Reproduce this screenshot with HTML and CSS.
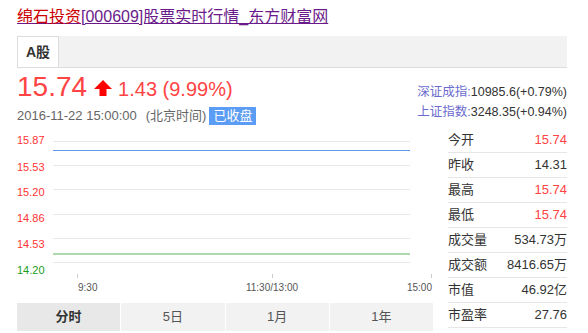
FILE: index.html
```html
<!DOCTYPE html>
<html lang="zh-CN">
<head>
  <meta charset="UTF-8" />
  <title>绵石投资[000609]股票实时行情_东方财富网</title>
  <link rel="stylesheet" href="styles.css">
</head>
<body>
<div class="page">

  <a class="title" href="#"><span class="name">绵石投资</span>[000609]股票实时行情_东方财富网</a>

  <div class="market-tabs">
    <span class="market-tab">A股</span>
  </div>

  <div class="quote">
    <div class="quote-main">
      <div class="price-line">
        <span class="price">15.74</span>
        <svg class="arrow" width="18" height="16" viewBox="0 0 18 16">
          <path d="M9 0 L18 9 L12.5 9 L12.5 16 L5.5 16 L5.5 9 L0 9 Z" fill="#f00"/>
        </svg>
        <span class="change">1.43 (9.99%)</span>
      </div>
      <div class="time-line">
        <span>2016-11-22 15:00:00</span>
        <span class="zone">(北京时间)</span>
        <span class="status">已收盘</span>
      </div>
    </div>
    <div class="indexes">
      <div><span class="idx-name">深证成指:</span>10985.6(+0.79%)</div>
      <div><span class="idx-name">上证指数:</span>3248.35(+0.94%)</div>
    </div>
  </div>

  <div class="main">
    <div class="chart-col">
      <svg class="chart" width="416" height="178" viewBox="0 0 416 178">
        <g class="grid">
          <line x1="36" x2="393" y1="16.5" y2="16.5"/>
          <line x1="36" x2="393" y1="40.5" y2="40.5"/>
          <line x1="36" x2="393" y1="64.5" y2="64.5"/>
          <line x1="36" x2="393" y1="89.5" y2="89.5"/>
          <line x1="36" x2="393" y1="113.5" y2="113.5"/>
          <line x1="36" x2="393" y1="137.5" y2="137.5"/>
        </g>
        <line class="avg" x1="36" x2="393" y1="25.5" y2="25.5"/>
        <line class="last" x1="36" x2="393" y1="129" y2="129"/>
        <g class="ylabels">
          <text x="0" y="19">15.87</text>
          <text x="0" y="46">15.53</text>
          <text x="0" y="71">15.20</text>
          <text x="0" y="97">14.86</text>
          <text x="0" y="123">14.53</text>
          <text x="0" y="149" class="down">14.20</text>
        </g>
        <g class="ticks">
          <line x1="60.5" x2="60.5" y1="149" y2="153"/>
          <line x1="255.5" x2="255.5" y1="149" y2="153"/>
          <line x1="414.5" x2="414.5" y1="149" y2="153"/>
        </g>
        <g class="xlabels">
          <text x="61" y="166">9:30</text>
          <text x="255" y="166" text-anchor="middle">11:30/13:00</text>
          <text x="415" y="166" text-anchor="end">15:00</text>
        </g>
      </svg>
      <div class="periods">
        <span class="period active">分时</span>
        <span class="period">5日</span>
        <span class="period">1月</span>
        <span class="period">1年</span>
      </div>
    </div>

    <div class="stats">
      <div class="row"><span>今开</span><span class="up">15.74</span></div>
      <div class="row"><span>昨收</span><span>14.31</span></div>
      <div class="row"><span>最高</span><span class="up">15.74</span></div>
      <div class="row"><span>最低</span><span class="up">15.74</span></div>
      <div class="row"><span>成交量</span><span>534.73万</span></div>
      <div class="row"><span>成交额</span><span>8416.65万</span></div>
      <div class="row"><span>市值</span><span>46.92亿</span></div>
      <div class="row"><span>市盈率</span><span>27.76</span></div>
    </div>
  </div>

</div>
</body>
</html>
```

FILE: styles.css
```css
body {
  margin: 0;
  background: #fff;
  color: #333;
  font-family: "Liberation Sans", "Noto Sans CJK SC", sans-serif;
}
.page {
  width: 550px;
  padding: 6px 0 0 17px;
}
.title {
  display: inline-block;
  font-size: 16px;
  line-height: 22px;
  color: #6a1b8a;
  text-decoration: underline;
}
.title .name {
  color: #cc0000;
}
.market-tabs {
  margin-top: 8px;
  height: 31px;
  background: #f2f2f2;
  border-bottom: 1px solid #ddd;
  display: flex;
}
.market-tab {
  width: 40px;
  background: #fff;
  border: 1px solid #ddd;
  border-bottom: none;
  font-size: 14px;
  font-weight: bold;
  line-height: 30px;
  text-align: center;
}
.quote {
  margin-top: 3px;
  display: flex;
  justify-content: space-between;
  align-items: flex-start;
}
.price-line {
  display: flex;
  align-items: center;
  height: 32px;
  color: #f44;
}
.price {
  font-size: 28px;
  line-height: 32px;
}
.arrow {
  margin: 2px 6px 0 7px;
}
.change {
  font-size: 20px;
  line-height: 32px;
  padding-top: 3px;
}
.time-line {
  margin-top: 4px;
  display: flex;
  align-items: center;
  font-size: 13px;
  line-height: 18px;
  color: #666;
}
.zone {
  margin-left: 9px;
}
.status {
  margin-left: 3px;
  padding: 0 4px;
  background: #5b9cf4;
  color: #fff;
}
.indexes {
  padding-top: 11px;
  font-size: 12.5px;
  line-height: 20px;
  color: #333;
  text-align: right;
}
.idx-name {
  color: #6b6bcf;
}
.main {
  display: flex;
  justify-content: space-between;
}
.chart-col {
  width: 416px;
}
.chart {
  display: block;
  font-family: "Liberation Sans", sans-serif;
}
.chart .grid line {
  stroke: #e8e8e8;
  stroke-width: 1;
}
.chart .avg {
  stroke: #5b9be6;
  stroke-width: 1;
}
.chart .last {
  stroke: #aed9ad;
  stroke-width: 2;
}
.chart .ylabels text {
  font-size: 11px;
  fill: #f33;
}
.chart .ylabels text.down {
  fill: #1a9e1a;
}
.chart .ticks line {
  stroke: #ccc;
}
.chart .xlabels text {
  font-size: 10px;
  fill: #555;
}
.periods {
  display: flex;
  gap: 1px;
}
.period {
  flex: 1;
  height: 28px;
  line-height: 28px;
  background: #f2f2f2;
  text-align: center;
  font-size: 13px;
  color: #555;
}
.period.active {
  background: #e8e8e8;
  color: #333;
  font-weight: bold;
}
.stats {
  width: 119px;
  margin-top: 3px;
  font-size: 13px;
}
.row {
  display: flex;
  justify-content: space-between;
  height: 24px;
  line-height: 24px;
  border-bottom: 1px solid #e6e6e6;
}
.up {
  color: #f44;
}
```
